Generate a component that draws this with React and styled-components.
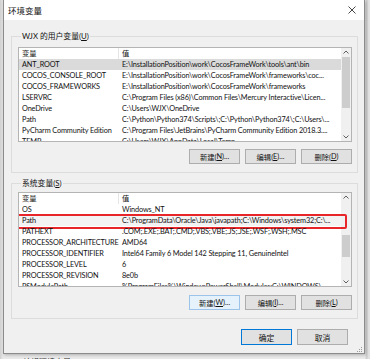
import React from "react"
import styled, { createGlobalStyle } from "styled-components"

const Global = createGlobalStyle`
  html, body { margin: 0; padding: 0; }
  body {
    background: #d4d4d4;
    font-family: Lato, "Noto Sans CJK SC", sans-serif;
    color: #111;
  }
`

const Page = styled.div`
  width: 370px;
  height: 359px;
  overflow: hidden;
  display: flex;
  flex-direction: column;
  background: linear-gradient(90deg, #cfcfcf 0, #e9e9e9 3px, #e9e9e9 365px, #c8c8c8 367px, #e2e2e2 368px);
`

const Dialog = styled.div`
  margin-left: 3px;
  width: 360px;
  height: 353px;
  flex-shrink: 0;
  background: #f0f0f0;
  border: 1px solid #8c8c8c;
  border-top: none;
  display: flex;
  flex-direction: column;
  box-shadow: 1px 1px 3px rgba(0, 0, 0, 0.25);
`

const TitleBar = styled.div`
  height: 20px;
  background: #fff;
  display: flex;
  align-items: center;
  justify-content: space-between;
  padding: 0 5px 0 4px;
  font-size: 8.5px;
`

const Close = styled.svg`
  width: 8px;
  height: 8px;
  margin-right: 3px;
`

const Body = styled.div`
  flex: 1;
  display: flex;
  flex-direction: column;
  padding: 0 6px 0 7px;
`

const Group = styled.div`
  margin-top: ${p => p.$top}px;
  border: 1px solid #dcdcdc;
  padding: 0 5px 8px 6px;
  display: flex;
  flex-direction: column;
`

const Legend = styled.div`
  align-self: flex-start;
  margin: -6px 0 0 3px;
  padding: 0 1px;
  line-height: 11px;
  font-size: 7.8px;
  background: #f0f0f0;
`

const ListBox = styled.div`
  margin-top: ${p => p.$top}px;
  height: 93px;
  border: 1px solid #b4b4b4;
  background: #fff;
  display: flex;
  overflow: hidden;
`

const Table = styled.div`
  flex: 1;
  min-width: 0;
  display: flex;
  flex-direction: column;
  font-size: 7.3px;
  letter-spacing: -0.12px;
`

const Row = styled.div`
  height: 11px;
  flex-shrink: 0;
  display: grid;
  grid-template-columns: 100px 1fr;
  align-items: center;
  background: ${p => (p.$selected ? "#dadada" : p.$soft ? "#f3f3f3" : "transparent")};
  position: relative;
`

const Cell = styled.div`
  padding-left: 3px;
  white-space: nowrap;
  overflow: hidden;
  line-height: 11px;
  height: 11px;
  border-right: ${p => (p.$sep ? "1px solid #e5e5e5" : "none")};
`

const Marker = styled.div`
  position: absolute;
  left: -4px;
  right: -6px;
  top: -1px;
  bottom: -3px;
  border: 2px solid #e8262a;
  border-radius: 2px;
  pointer-events: none;
`

const Scrollbar = styled.div`
  width: 10px;
  flex-shrink: 0;
  background: #f0f0f0;
  display: flex;
  flex-direction: column;
  align-items: center;
`

const Arrow = styled.svg`
  width: 10px;
  height: 9px;
  flex-shrink: 0;
`

const Track = styled.div`
  flex: 1;
  align-self: stretch;
  display: flex;
  flex-direction: column;
`

const Thumb = styled.div`
  margin: ${p => p.$offset}px 1px 0;
  height: ${p => p.$size}px;
  background: #cdcdcd;
`

const Buttons = styled.div`
  display: flex;
  justify-content: flex-end;
  gap: 5px;
  margin-top: ${p => p.$top}px;
`

const Button = styled.div`
  width: 49px;
  height: 13px;
  border: 1px solid ${p => (p.$default ? "#0078d7" : p.$focus ? "#9cc3ea" : "#adadad")};
  background: ${p => (p.$focus ? "#e5f1fb" : "#e1e1e1")};
  display: flex;
  align-items: center;
  justify-content: center;
  font-size: 7.3px;
  white-space: nowrap;
  u { text-decoration: underline; }
`

const Footer = styled.div`
  display: flex;
  justify-content: flex-end;
  gap: 5px;
  margin-top: 10px;
  padding-right: 10px;
`

const BigButton = styled(Button)`
  width: 49px;
  height: 14px;
  font-size: 7.8px;
`

const Grip = styled.svg`
  align-self: flex-end;
  width: 6px;
  height: 6px;
  margin: 1px 1px 0 0;
`

const Behind = styled.div`
  padding: 2px 0 0 23px;
  font-size: 8px;
  color: #333;
  white-space: nowrap;
`

const userVars = [
  ["ANT_ROOT", "E:\\InstallationPosition\\work\\CocosFrameWork\\tools\\ant\\bin"],
  ["COCOS_CONSOLE_ROOT", "E:\\InstallationPosition\\work\\CocosFrameWork\\frameworks\\coc..."],
  ["COCOS_FRAMEWORKS", "E:\\InstallationPosition\\work\\CocosFrameWork\\frameworks"],
  ["LSERVRC", "C:\\Program Files (x86)\\Common Files\\Mercury Interactive\\Licen..."],
  ["OneDrive", "C:\\Users\\WJX\\OneDrive"],
  ["Path", "C:\\Python\\Python374\\Scripts\\;C:\\Python\\Python374\\;C:\\Users\\..."],
  ["PyCharm Community Edition", "C:\\Program Files\\JetBrains\\PyCharm Community Edition 2018.3...."],
  ["TEMP", "C:\\Users\\WJX\\AppData\\Local\\Temp"],
]

const sysVars = [
  ["OS", "Windows_NT"],
  ["Path", "C:\\ProgramData\\Oracle\\Java\\javapath;C:\\Windows\\system32;C:\\..."],
  ["PATHEXT", ".COM;.EXE;.BAT;.CMD;.VBS;.VBE;.JS;.JSE;.WSF;.WSH;.MSC"],
  ["PROCESSOR_ARCHITECTURE", "AMD64"],
  ["PROCESSOR_IDENTIFIER", "Intel64 Family 6 Model 142 Stepping 11, GenuineIntel"],
  ["PROCESSOR_LEVEL", "6"],
  ["PROCESSOR_REVISION", "8e0b"],
  ["PSModulePath", "%ProgramFiles%\\WindowsPowerShell\\Modules;C:\\WINDOWS\\..."],
]

const Up = () => (
  <Arrow viewBox="0 0 10 9">
    <path d="M2.5 5.5 L5 3 L7.5 5.5" fill="none" stroke="#606060" strokeWidth="1" />
  </Arrow>
)

const Down = () => (
  <Arrow viewBox="0 0 10 9">
    <path d="M2.5 3.5 L5 6 L7.5 3.5" fill="none" stroke="#606060" strokeWidth="1" />
  </Arrow>
)

function VarList({ top, items, selected, marked, thumbOffset, thumbSize }) {
  return (
    <ListBox $top={top}>
      <Table>
        <Row>
          <Cell $sep>变量</Cell>
          <Cell>值</Cell>
        </Row>
        {items.map(([name, value], i) => (
          <Row key={name} $selected={i === selected} $soft={i === marked}>
            <Cell>{name}</Cell>
            <Cell>{value}</Cell>
            {i === marked && <Marker />}
          </Row>
        ))}
      </Table>
      <Scrollbar>
        <Up />
        <Track>
          <Thumb $offset={thumbOffset} $size={thumbSize} />
        </Track>
        <Down />
      </Scrollbar>
    </ListBox>
  )
}

export default function App() {
  return (
    <Page>
      <Global />
      <Dialog>
        <TitleBar>
          <span>环境变量</span>
          <Close viewBox="0 0 8 8">
            <path d="M0.5 0.5 L7.5 7.5 M7.5 0.5 L0.5 7.5" stroke="#333" strokeWidth="0.9" />
          </Close>
        </TitleBar>
        <Body>
          <Group $top={16}>
            <Legend>WJX 的用户变量(<u>U</u>)</Legend>
            <VarList top={5} items={userVars} selected={0} thumbOffset={0} thumbSize={51} />
            <Buttons $top={7}>
              <Button>新建(<u>N</u>)...</Button>
              <Button>编辑(<u>E</u>)...</Button>
              <Button>删除(<u>D</u>)</Button>
            </Buttons>
          </Group>
          <Group $top={10}>
            <Legend>系统变量(<u>S</u>)</Legend>
            <VarList top={3} items={sysVars} marked={1} thumbOffset={33} thumbSize={22} />
            <Buttons $top={8}>
              <Button $focus>新建(<u>W</u>)...</Button>
              <Button>编辑(<u>I</u>)...</Button>
              <Button>删除(<u>L</u>)</Button>
            </Buttons>
          </Group>
          <Footer>
            <BigButton $default>确定</BigButton>
            <BigButton>取消</BigButton>
          </Footer>
        </Body>
        <Grip viewBox="0 0 6 6">
          <rect x="4" y="0" width="1" height="1" fill="#999" />
          <rect x="2" y="2" width="1" height="1" fill="#999" />
          <rect x="4" y="2" width="1" height="1" fill="#999" />
          <rect x="0" y="4" width="1" height="1" fill="#999" />
          <rect x="2" y="4" width="1" height="1" fill="#999" />
          <rect x="4" y="4" width="1" height="1" fill="#999" />
        </Grip>
      </Dialog>
      <Behind>编辑环境变量</Behind>
    </Page>
  )
}
